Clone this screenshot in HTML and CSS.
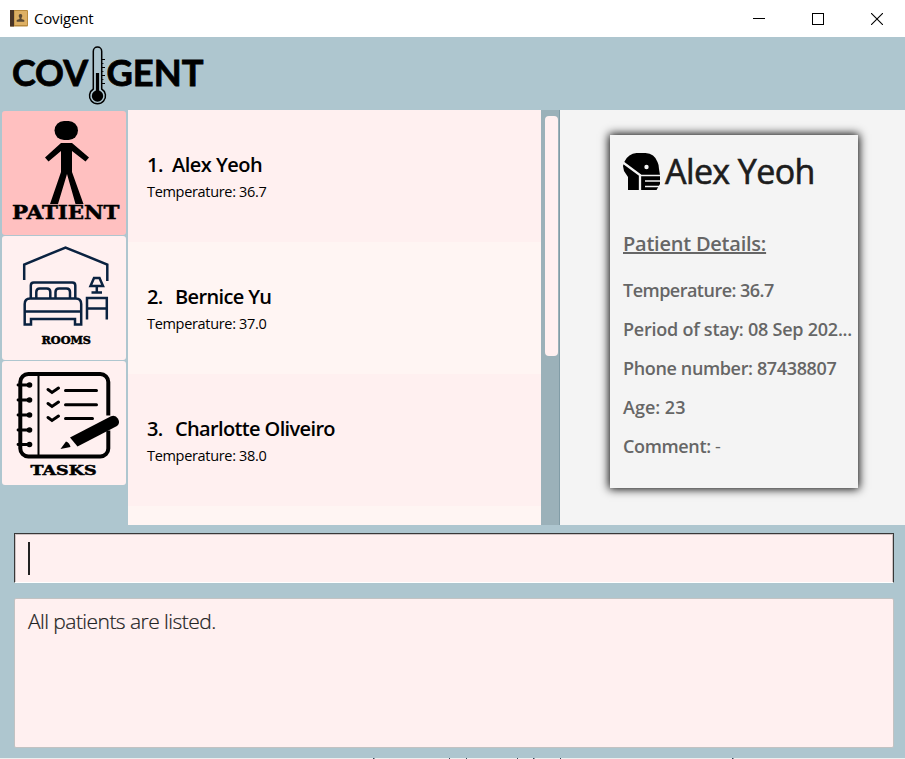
FILE: index.html
```html
<!DOCTYPE html>
<html lang="en">
<head>
<meta charset="utf-8">
<title>Covigent</title>
<link rel="stylesheet" href="styles.css">
</head>
<body>
<div class="window">
  <header class="titlebar">
    <svg class="app-icon" width="18" height="17" viewBox="0 0 18 17">
      <rect x="0" y="0" width="18" height="16.5" rx="1" fill="#b98a3c"/>
      <rect x="4.500" y="1" width="12.500" height="14" fill="#deb064"/>
      <rect x="0" y="0" width="4" height="16.500" fill="#4a3527"/>
      <path d="M10.500 4a1.800 1.800 0 0 1 1.800 2c0 .8-.6 1.300-.8 1.900v1.200l2.800 1v1.700H6.700v-1.700l2.800-1V7.900c-.2-.6-.8-1.100-.8-1.900a1.800 1.800 0 0 1 1.800-2z" fill="#5a4833"/>
    </svg>
    <span class="app-title">Covigent</span>
    <div class="controls">
      <svg width="12" height="12" viewBox="0 0 12 12"><path d="M0 5.500h12" stroke="#000"/></svg>
      <svg width="12" height="12" viewBox="0 0 12 12"><rect x=".5" y=".5" width="11" height="11" fill="none" stroke="#000"/></svg>
      <svg width="12" height="12" viewBox="0 0 12 12"><path d="M0 0l12 12M12 0L0 12" stroke="#000" stroke-width="1.100"/></svg>
    </div>
  </header>

  <div class="brand">
    <svg width="220" height="73" viewBox="0 37 220 73">
      <text class="logo-text" x="12" y="86" textLength="76" lengthAdjust="spacingAndGlyphs">COV</text>
      <text class="logo-text" x="106.500" y="86" textLength="97" lengthAdjust="spacingAndGlyphs">GENT</text>
      <path d="M93.300 89V51.300a4.200 4.200 0 0 1 8.400 0V89a8 8 0 1 1-8.400 0z" fill="#aec6cf" stroke="#000" stroke-width="1.500"/>
      <circle cx="97.500" cy="96" r="5.700"/>
      <path d="M97.500 73v22" stroke="#000" stroke-width="3.200"/>
      <path d="M102 59.500h3M102 67.500h3M102 75.500h3M102 83.500h3" stroke="#000" stroke-width="1"/>
      <path d="M102 63.500h1.500M102 71.500h1.500M102 79.500h1.500" stroke="#000" stroke-width=".8"/>
    </svg>
  </div>

  <main class="main">
    <nav class="sidebar">
      <button class="tab active" aria-label="Patient">
        <svg width="124" height="124" viewBox="2 111 124 124">
          <rect x="54.500" y="121" width="23.500" height="19" rx="9.500"/>
          <path d="M61 143h11l17 14.500-3.500 4L72 151v21l11.500 32H75.500L67 174l-9 30H50l11-32V151l-12.500 10.500-3.500-4z"/>
          <text class="slab" x="12" y="218.700" font-size="18.500" textLength="107.500" lengthAdjust="spacingAndGlyphs">PATIENT</text>
        </svg>
      </button>
      <button class="tab" aria-label="Rooms">
        <svg width="124" height="124" viewBox="2 236 124 124">
          <g fill="none" stroke="#0a2240" stroke-width="2.500">
            <path d="M24.200 280V264.500L65.500 247.500L107.300 264.500V281"/>
            <path d="M30.800 299V285.500q0-3 3-3h38.500q3 0 3 3V299"/>
            <path d="M36.300 298v-6q0-3.500 3.500-3.500h7q3.500 0 3.500 3.500v6M55.500 298v-6q0-3.500 3.500-3.500h7.500q3.500 0 3.500 3.500v6"/>
            <path d="M24.700 311.500V304q0-5.500 5.500-5.500h45.500q5.500 0 5.500 5.500v7.500v13h-6.200v-5.500H31v5.500h-6.300z M24.700 311.500h56.500"/>
            <path d="M87 319.500V298h19.800v21.500M87 308.500h19.800"/>
            <path d="M94 278h5.500l3.500 8H90.500zM96.800 286v6M91.500 292.500h10.500"/>
          </g>
          <text class="slab" x="41.500" y="343.700" font-size="10.500" textLength="49.500" lengthAdjust="spacingAndGlyphs">ROOMS</text>
        </svg>
      </button>
      <button class="tab" aria-label="Tasks">
        <svg width="124" height="124" viewBox="2 361 124 124">
          <rect x="20.300" y="374" width="88" height="82.500" rx="8" fill="none" stroke="#000" stroke-width="4"/>
          <path d="M38.500 374v82" stroke="#000" stroke-width="2"/>
          <path d="M18 385h12M18 400h12M18 415h12M18 430h12M18 444.500h12" stroke="#000" stroke-width="2.800" stroke-linecap="round"/>
          <circle cx="29.500" cy="385" r="2.800"/><circle cx="29.500" cy="400" r="2.800"/><circle cx="29.500" cy="415" r="2.800"/><circle cx="29.500" cy="430" r="2.800"/><circle cx="29.500" cy="444.500" r="2.800"/>
          <g fill="none" stroke="#000" stroke-width="3" stroke-linecap="round">
            <path d="M48 389.500l4 3 6.500-4.500M48 403.500l4 3 6.500-4.500M48 417.500l4 3 6.500-4.500"/>
            <path d="M65.500 390.500h31M65.500 404.800h31M65.500 418.500h27"/>
          </g>
          <path d="M103 415.500h10v15h-10z" fill="#fff0f0"/>
          <path d="M70 437.500l41-21.300q4.500-1.500 7 2.500 2.500 4.500-1 7.300l-39.500 20.500z"/>
          <path d="M60.500 449l5.500-7.500q3.500 1 4.500 5.500z"/>
          <text class="slab" x="30.500" y="475.200" font-size="13" textLength="66" lengthAdjust="spacingAndGlyphs">TASKS</text>
        </svg>
      </button>
    </nav>

    <section class="list">
      <article class="row"><h2><span class="num first">1.</span>Alex Yeoh</h2><p>Temperature: 36.7</p></article>
      <article class="row alt"><h2 class="tight"><span class="num">2.</span>Bernice Yu</h2><p>Temperature: 37.0</p></article>
      <article class="row"><h2 class="tight"><span class="num">3.</span>Charlotte Oliveiro</h2><p>Temperature: 38.0</p></article>
      <article class="row alt"></article>
    </section>
    <div class="scrollbar"><div class="thumb"></div></div>

    <section class="detail">
      <div class="card">
        <div class="card-head">
          <svg width="38" height="38" viewBox="623 153 38 38">
            <path d="M624.500 161.500q4-8 12-8.500h9q9 .5 12 9 1.500 3 1.500 7l1 6v9l-3.500 6H628v-13l-4-6-1-5z"/>
            <circle cx="646.500" cy="167" r="2.200" fill="#f4f4f4"/>
            <path d="M623 162.500l17 12.500v16.500" fill="none" stroke="#f4f4f4" stroke-width="2.300"/>
            <path d="M640 175.500h21M645 181h16M645 186.500h16" fill="none" stroke="#f4f4f4" stroke-width="1.600"/>
          </svg>
          <h1>Alex Yeoh</h1>
        </div>
        <h3>Patient Details:</h3>
        <p class="tight">Temperature: 36.7</p>
        <p>Period of stay: 08 Sep 202...</p>
        <p class="mid">Phone number: 87438807</p>
        <p class="wide">Age: 23</p>
        <p class="mid">Comment: <span class="dash">-</span></p>
      </div>
    </section>
  </main>

  <div class="command"><div class="input"><span class="caret"></span></div></div>
  <div class="result"><div class="output">All patients are listed.</div></div>
  <div class="edge"><svg width="905" height="1" viewBox="0 0 905 1"><path d="M373 0h1.500v1h-1.500zM449 0h1v1h-1zM466 0h1v1h-1zM517 0h1v1h-1zM533 0h1.500v1h-1.500zM560 0h1v1h-1zM732 0h1.500v1h-1.500z" fill="#345"/></svg></div>
</div>
</body>
</html>
```
FILE: styles.css
```css
* { box-sizing: border-box; margin: 0; padding: 0; }
body { width: 905px; height: 759px; overflow: hidden; font-family: "Open Sans", "Noto Sans", sans-serif; color: #000; }
.window { display: flex; flex-direction: column; width: 905px; height: 759px; background: #aec6cf; }
.titlebar { display: flex; align-items: center; height: 37px; padding-left: 10px; padding-right: 22px; background: #fff; }
.app-title { margin-left: 6px; font-size: 15px; line-height: 37px; letter-spacing: -.18px; }
.controls { display: flex; gap: 47px; margin-left: auto; }
.brand { height: 73px; }
svg { display: block; }
.logo-text { font-family: Lato, "Open Sans", sans-serif; font-weight: 700; font-size: 37px; stroke: #000; stroke-width: .8px; }
.main { display: flex; height: 415px; }
.sidebar { display: flex; flex-direction: column; gap: 1px; width: 128px; padding: 1px 2px 0; }
.tab { display: block; height: 124px; border: 0; border-radius: 3px; background: #fff0f0; overflow: hidden; }
.tab.active { background: #ffc0c0; }
.slab { font-family: "DejaVu Serif", serif; font-weight: 700; stroke: #000; stroke-width: .5px; }
.list { width: 413px; overflow: hidden; }
.row { height: 132px; padding: 41px 19px 0; background: #fff0f0; }
.row.alt { background: #fff5f3; }
.row h2 { font-size: 20px; line-height: 28px; font-weight: 600; letter-spacing: -.52px; white-space: pre; }
.row h2.tight { letter-spacing: -.64px; }
.num { display: inline-block; width: 28px; }
.num.first { width: 25px; }
.row p { font-size: 14.500px; line-height: 26px; letter-spacing: -.32px; white-space: pre; }
.scrollbar { width: 19px; padding: 6px 1px 0 4px; background: #9bb1b9; border-right: 1px solid #819ca6; }
.thumb { height: 240px; background: #fff0f0; border-radius: 4px; }
.detail { flex: 1; padding: 25px 0 0 50px; background: #f4f4f4; }
.card { width: 248px; height: 353px; padding: 18px 0 0 13px; background: #f4f4f4; box-shadow: 0 0 9px 1px #000; color: #666; }
.card-head { display: flex; height: 38px; color: #1d1d1d; }
.card h1 { margin-left: 4px; font-size: 34px; font-weight: 400; line-height: 36px; letter-spacing: -.6px; -webkit-text-stroke: .6px #1d1d1d; white-space: pre; }
.card h3 { margin-top: 39px; margin-bottom: 13px; font-size: 20px; line-height: 28px; font-weight: 600; letter-spacing: -.23px; text-decoration: underline; white-space: pre; }
.card p { font-size: 18px; font-weight: 600; line-height: 39px; letter-spacing: -.24px; white-space: pre; }
.card p.tight { letter-spacing: -.52px; }
.card p.mid { letter-spacing: -.36px; }
.card p.wide { letter-spacing: 0; }
.card .dash { font-weight: 400; }
.command { height: 65px; padding: 8px 11px 0 14px; }
.input { height: 50px; padding: 8px 13px; background: #fff0f0; border: 1px solid #383838; border-bottom-color: #fff; box-shadow: inset 0 1px #cfc3c3, inset 1px 0 #cfc3c3, inset -1px 0 #cfc3c3; }
.caret { display: block; width: 2px; height: 33px; background: #222; }
.result { height: 168px; padding: 8px 11px 0 14px; }
.output { height: 150px; padding: 6px 13px; background: #fff0f0; border: 1px solid #c2c2c2; border-radius: 2px; font-size: 21px; font-weight: 300; line-height: 32px; letter-spacing: -.55px; color: #222; -webkit-text-stroke: .2px #222; white-space: pre; }
.edge { height: 1px; background: #eee; }
```
